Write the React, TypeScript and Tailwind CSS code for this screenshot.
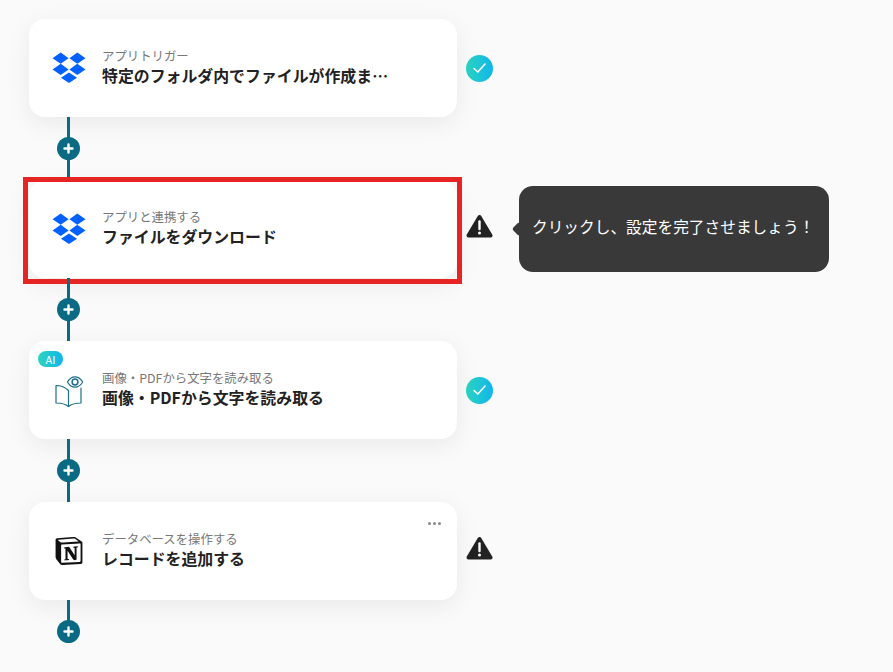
import { SiNotion } from 'react-icons/si';

const font = { fontFamily: '"Noto Sans CJK JP", "Noto Sans", sans-serif' };

function DropboxIcon() {
  return (
    <svg width="34" height="32" viewBox="0 0 34 32" fill="#0061ff">
      <polygon points="8.7,0.5 16.6,6.2 8.7,11.8 0.5,6.2" />
      <polygon points="25.3,0.5 33.5,6.2 25.3,11.8 17.4,6.2" />
      <polygon points="8.7,11.8 16.6,17.4 8.7,23 0.5,17.4" />
      <polygon points="25.3,11.8 33.5,17.4 25.3,23 17.4,17.4" />
      <polygon points="17,20.4 25,25.8 17,31 9,25.8" />
    </svg>
  );
}

function BookEyeIcon() {
  return (
    <svg width="30" height="34" viewBox="0 0 30 34" fill="none" stroke="#1c6f88" strokeWidth="1.2" strokeLinejoin="round" strokeLinecap="round">
      <path d="M14.5 17.5 C12 15 7 12.5 2 12.5 L2 30 C7 30 11.5 31 14.5 33.5 C17.5 31 22 30 27 30 L27 15" />
      <path d="M14.5 17.5 L14.5 34" />
      <path d="M13.5 9 C15.5 5.5 18.5 3.8 21 3.8 C23.5 3.8 26.5 5.5 28.8 9 C26.5 12.5 23.5 14.2 21 14.2 C18.5 14.2 15.5 12.5 13.5 9 Z" />
      <circle cx="21" cy="9" r="2.9" strokeWidth="1.5" />
    </svg>
  );
}

function CheckBadge() {
  return (
    <div className="w-[27px] h-[27px] rounded-full bg-gradient-to-r from-[#2dd4bf] to-[#12b5ea] flex items-center justify-center">
      <svg width="15" height="12" viewBox="0 0 15 12" fill="none" stroke="#ffffff" strokeWidth="1.6" strokeLinecap="round" strokeLinejoin="round">
        <path d="M2 6.5 L5.8 10 L13 2" />
      </svg>
    </div>
  );
}

function WarningBadge() {
  return (
    <svg width="27" height="25" viewBox="0 0 27 25" className="mb-[5px]">
      <path d="M13.5 3 L24.5 21.5 L2.5 21.5 Z" fill="#222222" stroke="#222222" strokeWidth="4" strokeLinejoin="round" />
      <path d="M13.5 7.5 L13.5 15" stroke="#ffffff" strokeWidth="2.4" strokeLinecap="round" />
      <circle cx="13.5" cy="19" r="1.5" fill="#ffffff" />
    </svg>
  );
}

function Connector({ last }: { last: boolean }) {
  return (
    <div className="w-[79px] h-[63px] relative flex justify-center">
      <div className={last ? 'w-[3px] h-[30px] bg-[#0b6a83]' : 'w-[3px] h-full bg-[#0b6a83]'} />
      <div className="absolute top-[20px] w-[23px] h-[23px] rounded-full bg-[#0b6a83] flex items-center justify-center">
        <svg width="11" height="11" viewBox="0 0 11 11" stroke="#ffffff" strokeWidth="2.4" strokeLinecap="round">
          <path d="M5.5 1.5 V9.5 M1.5 5.5 H9.5" />
        </svg>
      </div>
    </div>
  );
}

interface Step {
  label: string;
  title: string;
  icon: React.ReactNode;
  status: 'ok' | 'warn';
  ai?: boolean;
  menu?: boolean;
  active?: boolean;
}

const steps: Step[] = [
  { label: 'アプリトリガー', title: '特定のフォルダ内でファイルが作成または更新されたら', icon: <DropboxIcon />, status: 'ok' },
  { label: 'アプリと連携する', title: 'ファイルをダウンロード', icon: <DropboxIcon />, status: 'warn', active: true },
  { label: '画像・PDFから文字を読み取る', title: '画像・PDFから文字を読み取る', icon: <BookEyeIcon />, status: 'ok', ai: true },
  { label: 'データベースを操作する', title: 'レコードを追加する', icon: <SiNotion size={28} color="#111111" />, status: 'warn', menu: true },
];

export default function App() {
  return (
    <div className="w-[893px] h-[672px] overflow-hidden bg-[#fafafa] pt-[19px] pl-[29px]" style={font}>
      {steps.map((step, i) => (
        <div key={step.label}>
          <div className="flex items-center">
            <div className="relative w-[428px] h-[98px] shrink-0 bg-white rounded-[16px] shadow-[0_6px_24px_rgba(0,0,0,0.07)] flex items-center pl-[23px]">
              <div className="w-[34px] h-[34px] flex items-center justify-center shrink-0">{step.icon}</div>
              <div className="ml-[16px] w-[292px]">
                <p className="text-[12.4px] leading-[16px] text-[#777777] truncate">{step.label}</p>
                <p className="text-[15.9px] leading-[24px] font-bold text-[#222222] truncate">{step.title}</p>
              </div>
              {step.ai && (
                <span className="absolute left-[9px] top-[10px] w-[25px] h-[16px] rounded-full bg-gradient-to-r from-[#2dd4bf] to-[#12b5ea] text-white text-[11px] leading-[16px] text-center">
                  AI
                </span>
              )}
              {step.menu && (
                <div className="absolute right-[16px] top-[20px] flex gap-[2px]">
                  <span className="w-[3px] h-[3px] rounded-full bg-[#888888]" />
                  <span className="w-[3px] h-[3px] rounded-full bg-[#888888]" />
                  <span className="w-[3px] h-[3px] rounded-full bg-[#888888]" />
                </div>
              )}
              {step.active && (
                <div className="absolute -left-[6px] -right-[5px] -top-[3px] -bottom-[6px] border-[5px] border-[#e62424]" />
              )}
            </div>
            <div className="ml-[9px] w-[27px] flex justify-center shrink-0">
              {step.status === 'ok' ? <CheckBadge /> : <WarningBadge />}
            </div>
            {step.active && (
              <div className="relative ml-[26px] w-[310px] h-[86px] rounded-[14px] bg-[#393939] flex items-center pl-[13px] pb-[4px] text-white text-[15.7px]">
                <span className="absolute -left-[5px] top-[38px] w-[10px] h-[10px] rotate-45 bg-[#393939] rounded-[2px]" />
                クリックし、設定を完了させましょう！
              </div>
            )}
          </div>
          <Connector last={i === steps.length - 1} />
        </div>
      ))}
    </div>
  );
}
